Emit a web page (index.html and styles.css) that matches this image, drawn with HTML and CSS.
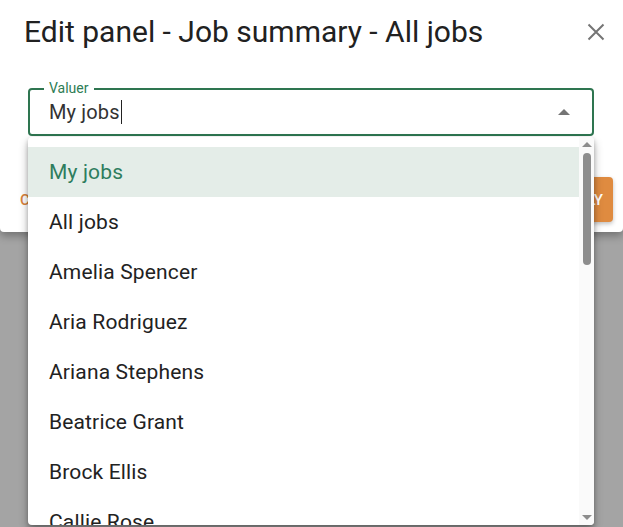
FILE: index.html
```html
<!DOCTYPE html>
<html lang="en">
<head>
    <meta charset="UTF-8">
    <meta name="viewport" content="width=device-width, initial-scale=1.0">
    <title>Edit panel</title>
    <link rel="stylesheet" href="styles.css">
</head>
<body>
    <div class="dialog">
        <div class="dialog-head">
            <h2 class="dialog-title">Edit panel - Job summary - All jobs</h2>
            <button class="close-btn" aria-label="Close">
                <svg width="18" height="18" viewBox="0 0 18 18">
                    <path d="M1.5 1.5 L16.5 16.5 M16.5 1.5 L1.5 16.5" stroke="#757575" stroke-width="2" fill="none"/>
                </svg>
            </button>
        </div>

        <div class="field">
            <span class="field-label">Valuer</span>
            <div class="field-value">My jobs<span class="caret"></span></div>
            <span class="field-arrow"></span>
        </div>

        <div class="dialog-actions">
            <button class="btn-text">Cancel</button>
            <button class="btn-apply">Apply</button>
        </div>
    </div>

    <div class="menu">
        <ul class="menu-list">
            <li class="menu-item selected">My jobs</li>
            <li class="menu-item">All jobs</li>
            <li class="menu-item">Amelia Spencer</li>
            <li class="menu-item">Aria Rodriguez</li>
            <li class="menu-item">Ariana Stephens</li>
            <li class="menu-item">Beatrice Grant</li>
            <li class="menu-item">Brock Ellis</li>
            <li class="menu-item">Callie Rose</li>
            <li class="menu-item">Daniel Hart</li>
            <li class="menu-item">Edward Lane</li>
        </ul>
        <div class="scrollbar">
            <span class="sb-arrow up"></span>
            <div class="sb-track">
                <div class="sb-thumb"></div>
            </div>
            <span class="sb-arrow down"></span>
        </div>
    </div>
</body>
</html>
```

FILE: styles.css
```css
body {
    font-family: Roboto, "Liberation Sans", sans-serif;
    margin: 0;
    padding: 0;
    background: #a4a4a4;
    height: 527px;
    overflow: hidden;
}

.dialog {
    background: #fff;
    height: 232px;
    box-sizing: border-box;
    padding: 14px 17px 0 24px;
    border-radius: 0 0 4px 4px;
    box-shadow: 0 4px 8px rgba(0, 0, 0, 0.3);
}

.dialog-head {
    display: flex;
    justify-content: space-between;
    align-items: center;
}
.dialog-title {
    margin: 0;
    font-size: 30px;
    font-weight: 400;
    line-height: 36px;
    color: #212121;
}
.close-btn {
    border: none;
    background: none;
    padding: 0;
    width: 20px;
    height: 20px;
    display: flex;
    align-items: center;
    justify-content: center;
}

.field {
    position: relative;
    margin: 38px 12px 0 4px;
    height: 48px;
    box-sizing: border-box;
    border: 2px solid #2e7550;
    border-radius: 4px;
    display: flex;
    align-items: center;
    padding: 0 22px 0 19px;
}
.field-label {
    position: absolute;
    top: -9px;
    left: 14px;
    padding: 0 5px;
    background: #fff;
    color: #2e7d55;
    font-size: 14px;
    line-height: 14px;
}
.field-value {
    flex: 1;
    font-size: 20px;
    letter-spacing: 0.15px;
    color: #333;
    display: flex;
    align-items: center;
}
.caret {
    display: inline-block;
    width: 1px;
    height: 24px;
    background: #222;
    margin-left: 1px;
}
.field-arrow {
    width: 0;
    height: 0;
    border-left: 6px solid transparent;
    border-right: 6px solid transparent;
    border-bottom: 6px solid #757575;
}

.dialog-actions {
    display: flex;
    justify-content: space-between;
    align-items: center;
    margin: 41px -7px 0 -4px;
}
.btn-text {
    border: none;
    background: none;
    font-family: inherit;
    font-size: 15px;
    font-weight: 500;
    text-transform: uppercase;
    color: #d9833a;
    padding: 0;
}
.btn-apply {
    border: none;
    border-radius: 4px;
    background: #df8b40;
    color: #fff;
    font-family: inherit;
    font-size: 15px;
    font-weight: 500;
    text-transform: uppercase;
    height: 45px;
    padding: 0 10px 0 16px;
    box-shadow: 0 2px 4px rgba(0, 0, 0, 0.25);
}

/* dropdown popup, opened over the dialog */
.menu {
    position: absolute;
    top: 137px;
    left: 28px;
    width: 566px;
    height: 388px;
    background: #fff;
    border-radius: 4px;
    box-shadow: 0 5px 10px rgba(0, 0, 0, 0.3), 0 2px 4px rgba(0, 0, 0, 0.2);
    display: flex;
    overflow: hidden;
}
.menu-list {
    flex: 1;
    list-style: none;
    margin: 0;
    padding: 10px 0 0 0;
    overflow: hidden;
}
.menu-item {
    height: 50px;
    line-height: 50px;
    padding-left: 21px;
    font-size: 21px;
    letter-spacing: 0.15px;
    color: #222;
}
.menu-item.selected {
    background: #e4ede8;
    color: #2e7d5e;
}

.scrollbar {
    width: 15px;
    background: #fafafa;
    display: flex;
    flex-direction: column;
    align-items: center;
    padding: 5px 0;
    box-sizing: border-box;
}
.sb-arrow {
    width: 0;
    height: 0;
    border-left: 5px solid transparent;
    border-right: 5px solid transparent;
}
.sb-arrow.up {
    border-bottom: 5px solid #8d8d8d;
}
.sb-arrow.down {
    border-top: 5px solid #8d8d8d;
}
.sb-track {
    flex: 1;
    width: 100%;
    display: flex;
    justify-content: center;
    padding: 6px 0;
}
.sb-thumb {
    width: 8px;
    height: 112px;
    background: #8d8d8d;
    border-radius: 4px;
}
```
